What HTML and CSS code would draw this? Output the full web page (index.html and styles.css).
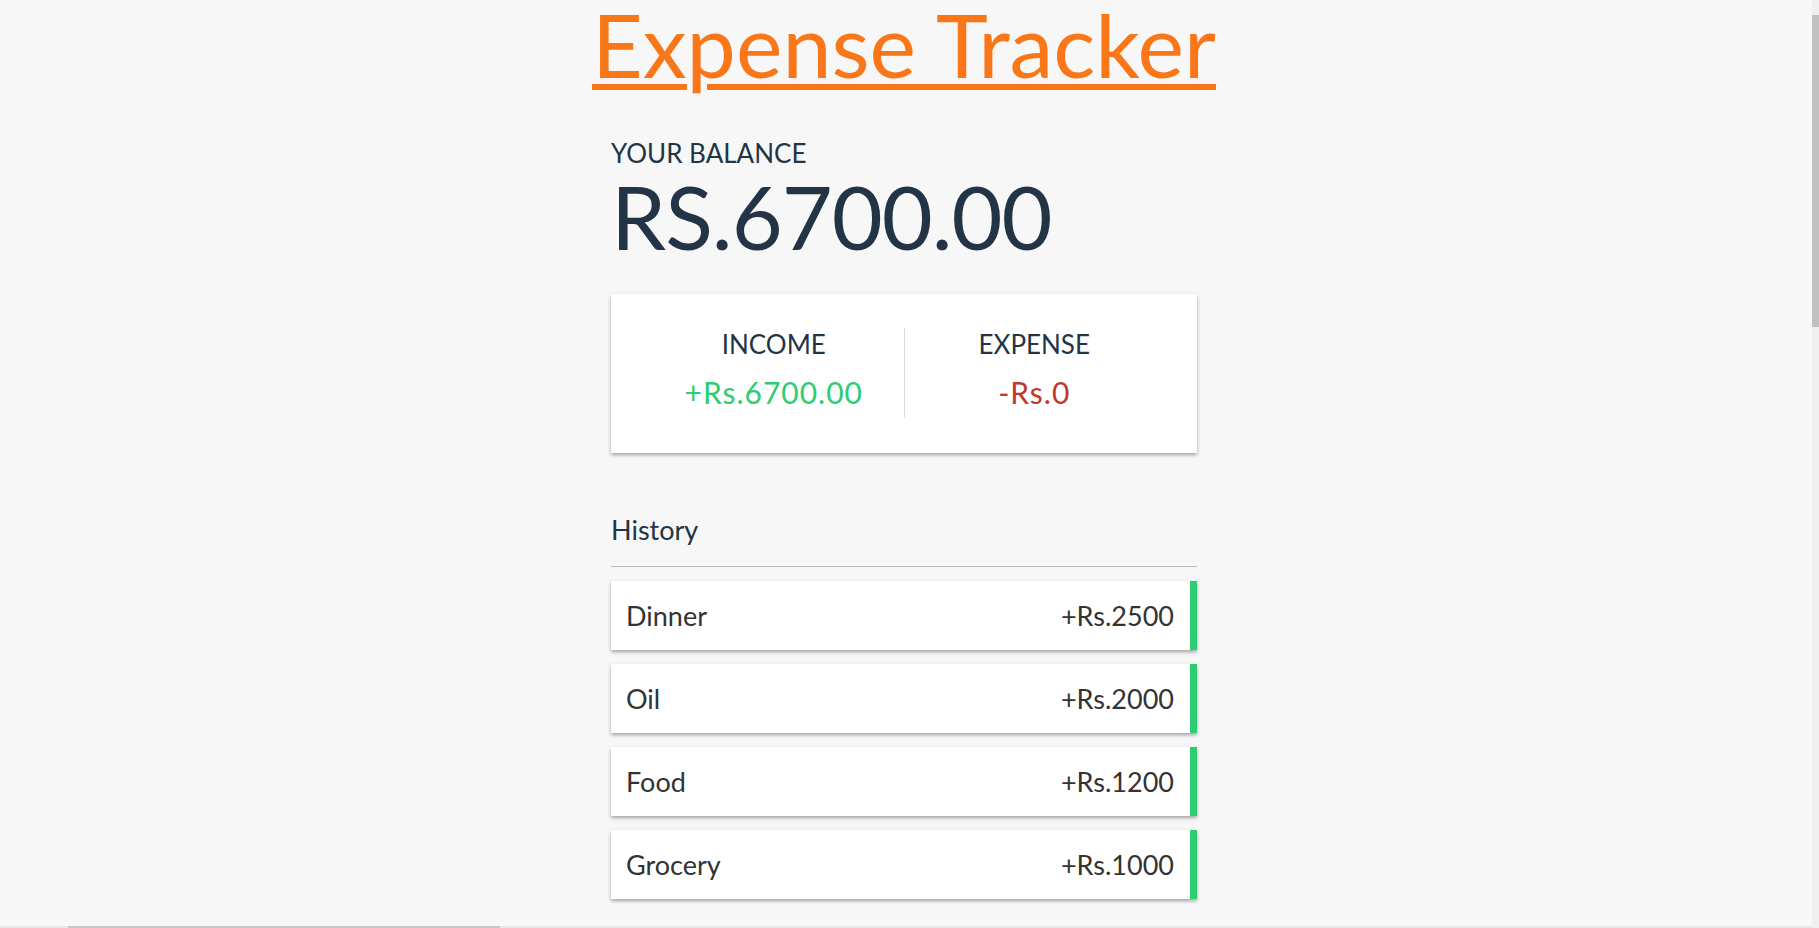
FILE: index.html
```html
<!DOCTYPE html>
<html lang="en">
<head>
<meta charset="UTF-8">
<title>Expense Tracker</title>
<link rel="stylesheet" href="styles.css">
</head>
<body>
  <h2 class="title"><a class="title-link" href="#">Expense Tracker</a></h2>
  <main class="container">
    <h4 class="label balance-label">Your Balance</h4>
    <h1 class="balance">RS.6700.00</h1>

    <section class="inc-exp">
      <div class="inc-exp-col">
        <h4 class="label">Income</h4>
        <p class="money plus">+Rs.6700.00</p>
      </div>
      <div class="inc-exp-col">
        <h4 class="label">Expense</h4>
        <p class="money minus">-Rs.0</p>
      </div>
    </section>

    <h3 class="section-title">History</h3>
    <ul class="list">
      <li class="item plus"><span>Dinner</span><span>+Rs.2500</span></li>
      <li class="item plus"><span>Oil</span><span>+Rs.2000</span></li>
      <li class="item plus"><span>Food</span><span>+Rs.1200</span></li>
      <li class="item plus"><span>Grocery</span><span>+Rs.1000</span></li>
    </ul>

    <h3 class="section-title">Add new transaction</h3>
    <form class="form">
      <div class="form-control">
        <label class="form-label" for="text">Text</label>
        <input class="form-input" type="text" id="text" placeholder="Enter text...">
      </div>
      <div class="form-control">
        <label class="form-label" for="amount">Amount<br>(negative - expense, positive - income)</label>
        <input class="form-input" type="number" id="amount" placeholder="Enter amount...">
      </div>
      <button class="btn" type="button">Add transaction</button>
    </form>
  </main>

  <div class="scrollbar-v" aria-hidden="true"><div class="scrollbar-v-thumb"></div></div>
  <div class="scrollbar-h" aria-hidden="true"><div class="scrollbar-h-thumb"></div></div>
</body>
</html>
```

FILE: styles.css
```css
* {
  box-sizing: border-box;
}

body {
  margin: 0;
  padding-right: 11px;
  background-color: #f7f7f7;
  font-family: "Lato", "Open Sans", sans-serif;
  color: #233446;
}

.title {
  margin: 0;
  font-size: 88px;
  line-height: 88px;
  font-weight: 400;
  text-align: center;
}

.title-link {
  color: #f97619;
  text-decoration: underline;
  text-decoration-thickness: 6px;
  text-underline-offset: 6px;
}

.container {
  width: 586px;
  margin: 0 auto 1400px;
}

.label {
  margin: 0;
  font-size: 26px;
  font-weight: 400;
  text-transform: uppercase;
  color: #233446;
}

.balance-label {
  margin-top: 49px;
}

.balance {
  margin: 0;
  font-size: 88px;
  line-height: 94px;
  font-weight: 400;
  letter-spacing: -1px;
}

.inc-exp {
  display: flex;
  justify-content: space-between;
  margin: 31px 0 0;
  padding: 34px 33px 35px;
  background-color: #fff;
  box-shadow: 0 2px 5px rgba(0, 0, 0, 0.12), 0 2px 3px rgba(0, 0, 0, 0.24);
}

.inc-exp-col {
  flex: 1;
  text-align: center;
}

.inc-exp-col:first-child {
  border-right: 1px solid #dedede;
}

.money {
  margin: 14px 0 8px;
  font-size: 30px;
  letter-spacing: 1px;
}

.money.plus {
  color: #2ecc71;
}

.money.minus {
  color: #c0392b;
}

.section-title {
  margin: 60px 0 14px;
  padding-bottom: 20px;
  border-bottom: 1px solid #bbb;
  font-size: 27px;
  font-weight: 400;
  color: #233446;
}

.list {
  list-style: none;
  margin: 0;
  padding: 0;
}

.item {
  display: flex;
  justify-content: space-between;
  margin-bottom: 14px;
  padding: 18px 16px 18px 15px;
  background-color: #fff;
  color: #333;
  font-size: 27px;
  box-shadow: 0 2px 5px rgba(0, 0, 0, 0.12), 0 2px 3px rgba(0, 0, 0, 0.24);
}

.item.plus {
  border-right: 7px solid #2ecc71;
}

.form-control {
  margin: 17px 0;
}

.form-label {
  display: inline-block;
  margin: 17px 0;
  font-size: 27px;
}

.form-input {
  display: block;
  width: 100%;
  padding: 17px;
  border: 1px solid #dedede;
  border-radius: 2px;
  font-size: 27px;
  font-family: inherit;
}

.btn {
  display: block;
  width: 100%;
  margin: 17px 0 50px;
  padding: 17px;
  border: 0;
  background-color: #9c88ff;
  color: #fff;
  font-size: 27px;
  font-family: inherit;
}

.scrollbar-v {
  position: fixed;
  top: 0;
  right: 0;
  width: 7px;
  height: 100%;
  background-color: #efefef;
}

.scrollbar-v-thumb {
  margin-top: 15px;
  height: 312px;
  background-color: #c1c1c1;
}

.scrollbar-h {
  position: fixed;
  left: 0;
  right: 7px;
  bottom: 0;
  height: 2px;
  background-color: #e8e8e8;
}

.scrollbar-h-thumb {
  margin-left: 68px;
  width: 432px;
  height: 100%;
  background-color: #c6c6c6;
}
```
